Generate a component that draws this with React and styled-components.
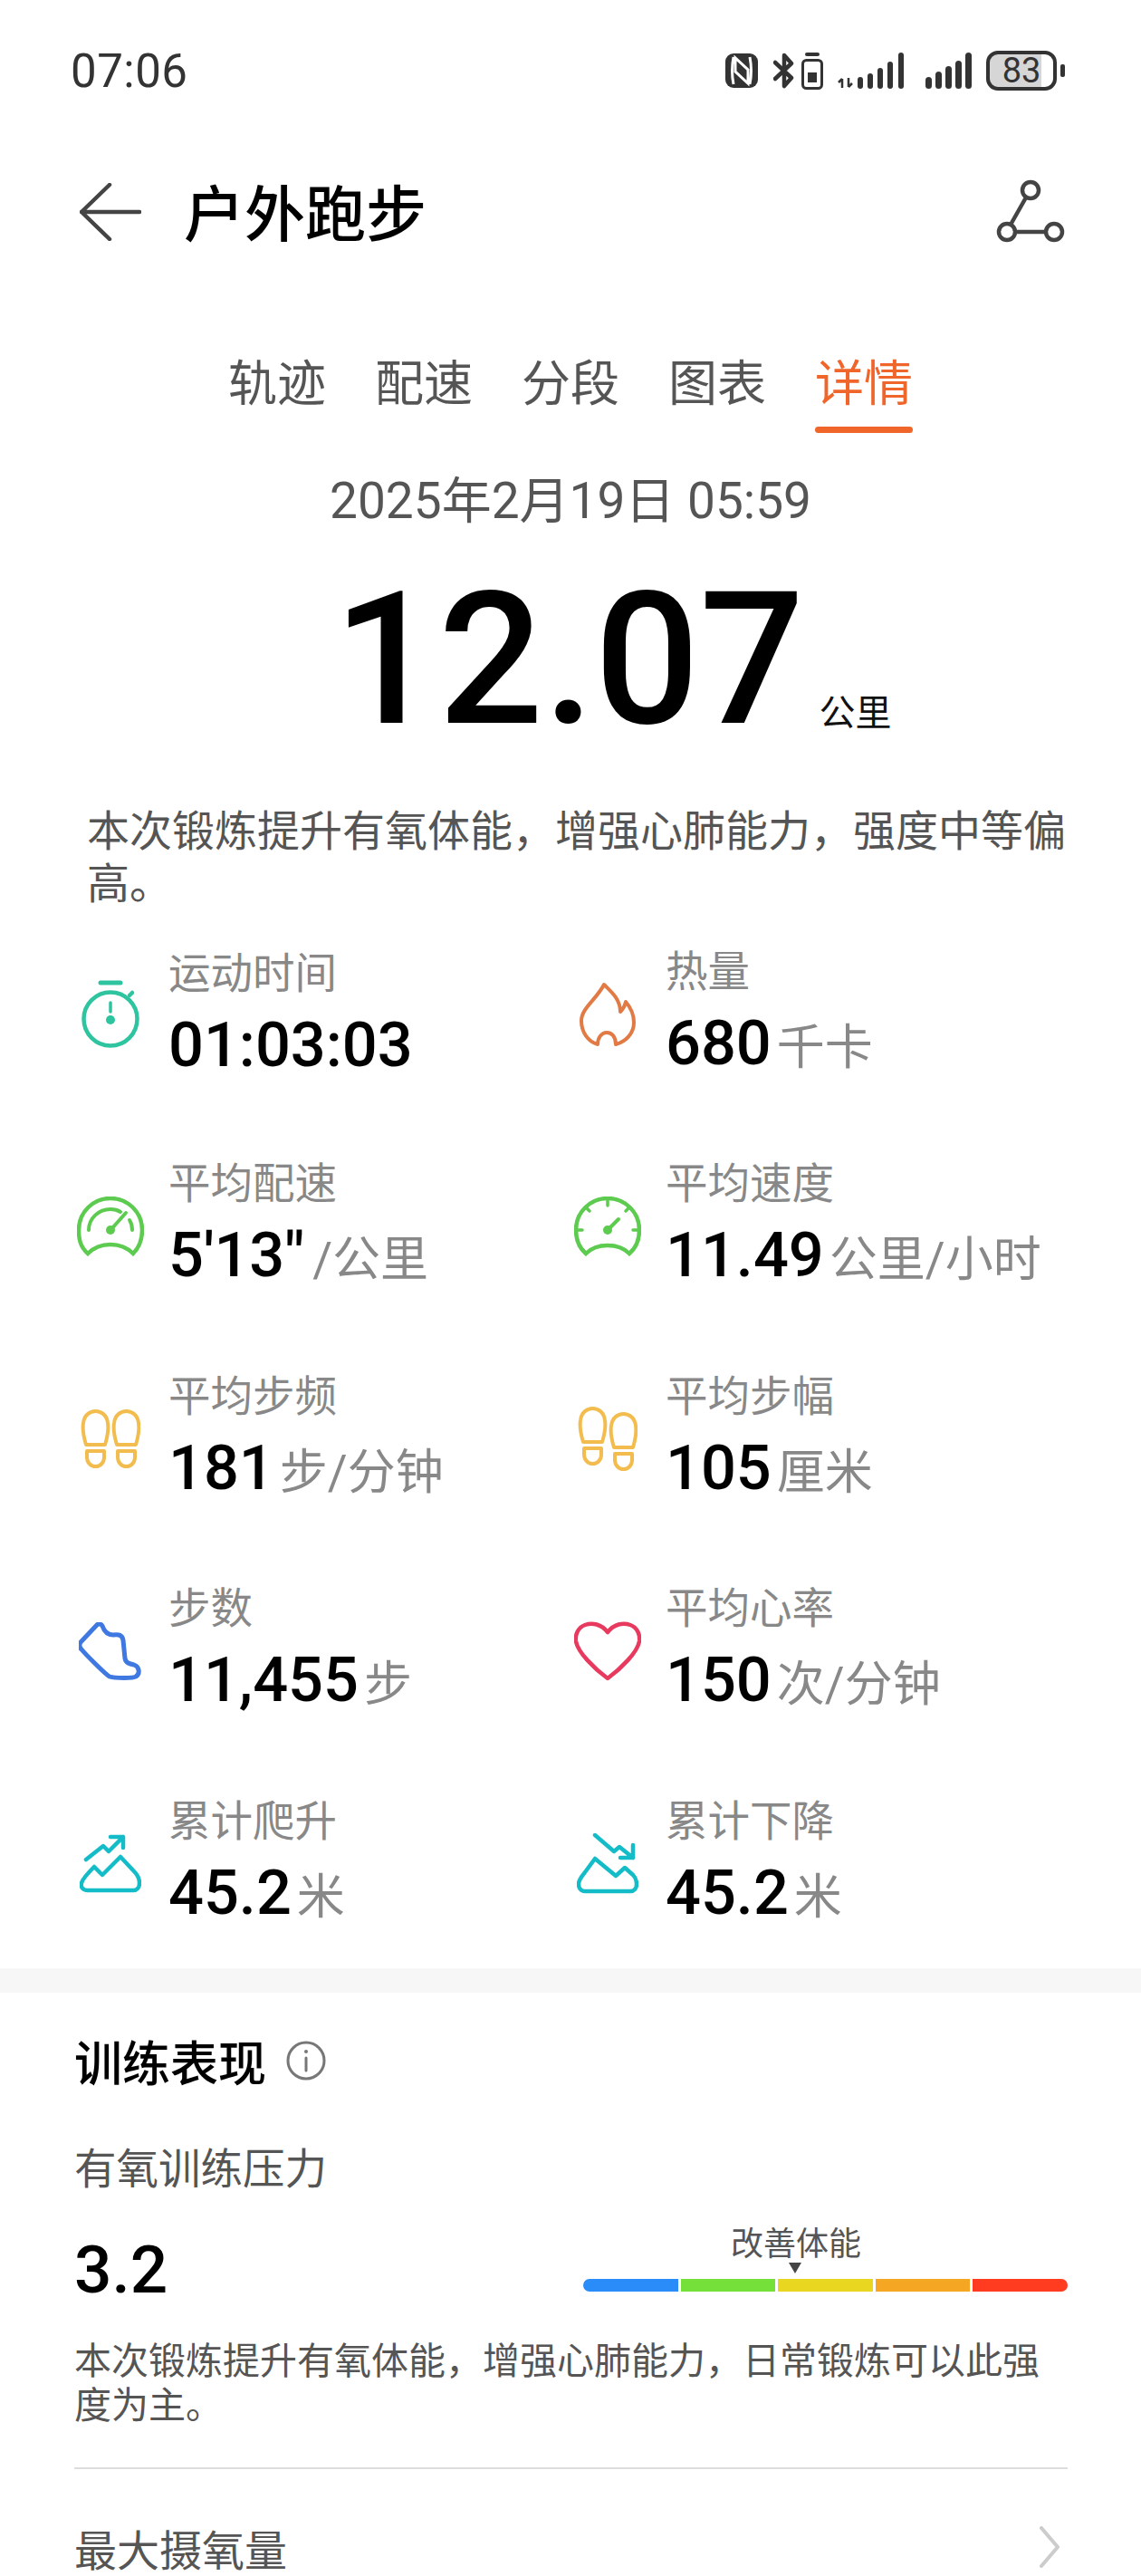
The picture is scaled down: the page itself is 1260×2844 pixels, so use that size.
import React from "react";
import styled, { createGlobalStyle } from "styled-components";

const GlobalStyle = createGlobalStyle`
  html, body {
    margin: 0;
    padding: 0;
    background: #fff;
  }
  body {
    font-family: Roboto, "Noto Sans CJK SC", sans-serif;
  }
`;

const Page = styled.div`
  width: 1260px;
  height: 2844px;
  overflow: hidden;
  background: #fff;
`;

const StatusBar = styled.div`
  height: 156px;
  display: flex;
  align-items: center;
  justify-content: space-between;
  padding: 0 84px 0 78px;
  box-sizing: border-box;
`;

const Clock = styled.div`
  font-size: 51px;
  color: #333;
  letter-spacing: 0.5px;
`;

const StatusIcons = styled.div`
  display: flex;
  align-items: center;
`;

const StatusIcon = styled.svg`
  display: block;
  margin-left: ${(p) => p.$gap || 0}px;
`;

const Battery = styled.div`
  width: 78px;
  height: 44px;
  margin-left: 16px;
  box-sizing: border-box;
  border: 4px solid #333;
  border-radius: 13px;
  background: linear-gradient(90deg, #d6d6d6 82%, #fff 82%);
  color: #333;
  font-size: 38px;
  line-height: 36px;
  text-align: center;
`;

const BatteryNub = styled.div`
  width: 5px;
  height: 14px;
  margin-left: 4px;
  background: #333;
  border-radius: 2px;
`;

const Header = styled.div`
  height: 156px;
  display: flex;
  align-items: center;
  padding: 0 84px 0 88px;
`;

const Title = styled.h1`
  flex: 1;
  margin: 0 0 0 47px;
  padding-bottom: 6px;
  font-size: 67px;
  font-weight: 500;
  color: #000;
`;

const Tabs = styled.div`
  display: flex;
  justify-content: center;
  gap: 54px;
  margin-top: 78px;
`;

const Tab = styled.div`
  font-size: 54px;
  line-height: 70px;
  height: 88px;
  position: relative;
  color: ${(p) => (p.$active ? "#f0652a" : "#555")};

  &::after {
    content: "";
    display: ${(p) => (p.$active ? "block" : "none")};
    position: absolute;
    left: 0;
    right: 0;
    bottom: 0;
    height: 7px;
    border-radius: 4px;
    background: #f0652a;
  }
`;

const DateLine = styled.div`
  margin-top: 40px;
  text-align: center;
  font-size: 55px;
  line-height: 70px;
  color: #555;
`;

const Distance = styled.div`
  display: flex;
  align-items: flex-end;
  padding-left: 368px;
  height: 220px;
  margin-top: 31px;
`;

const DistanceValue = styled.div`
  font-size: 204px;
  font-weight: 500;
  line-height: 220px;
  color: #000;
`;

const DistanceUnit = styled.div`
  font-size: 40px;
  line-height: 56px;
  margin: 0 0 23px 16px;
  color: #111;
`;

const Summary = styled.p`
  margin: 50px 78px 0 96px;
  font-size: 47px;
  line-height: 58px;
  color: #555;
`;

const StatsGrid = styled.div`
  display: grid;
  grid-template-columns: 549px 1fr;
  row-gap: 90.5px;
  padding-left: 76px;
  margin-top: 40px;
`;

const Stat = styled.div`
  display: flex;
  align-items: center;
  height: 144px;
`;

const IconSlot = styled.div`
  width: 92px;
  margin-right: 18px;
  margin-top: 5px;
  display: flex;
  justify-content: center;
  flex-shrink: 0;
`;

const StatText = styled.div`
  display: flex;
  flex-direction: column;
`;

const StatLabel = styled.div`
  font-size: 46.5px;
  line-height: 60px;
  color: #888;
`;

const StatValue = styled.div`
  margin-top: 14px;
  font-size: 68.5px;
  font-weight: 500;
  line-height: 70px;
  color: #000;
  white-space: nowrap;
`;

const StatUnit = styled.span`
  font-size: 53px;
  font-weight: 400;
  color: #888;
  margin-left: ${(p) => (p.$tight ? 9 : 6)}px;
`;

const Band = styled.div`
  height: 27px;
  margin-top: 46px;
  background: #f7f7f7;
`;

const Section = styled.div`
  padding: 0 81px 0 82px;
`;

const SectionHead = styled.div`
  display: flex;
  align-items: center;
  gap: 22px;
  margin-top: 40px;
  height: 70px;
`;

const SectionTitle = styled.div`
  font-size: 53px;
  font-weight: 500;
  color: #000;
`;

const MetricName = styled.div`
  margin-top: 55px;
  font-size: 46.5px;
  line-height: 60px;
  color: #555;
`;

const MetricRow = styled.div`
  display: flex;
  justify-content: space-between;
  align-items: flex-end;
  margin-top: 28px;
  height: 90px;
`;

const MetricValue = styled.div`
  font-size: 73px;
  font-weight: 500;
  line-height: 84px;
  color: #000;
  transform: translateY(5px);
`;

const Scale = styled.div`
  width: 535px;
  position: relative;
  margin-bottom: 13px;
`;

const ScaleLabel = styled.div`
  position: absolute;
  left: 163px;
  bottom: 30px;
  font-size: 36px;
  line-height: 44px;
  color: #555;
  white-space: nowrap;
`;

const ScaleMarker = styled.div`
  position: absolute;
  left: 227px;
  bottom: 20px;
  border-left: 7px solid transparent;
  border-right: 7px solid transparent;
  border-top: 12px solid #444;
`;

const ScaleBar = styled.div`
  display: flex;
  gap: 3px;
  height: 14px;
  border-radius: 7px;
  overflow: hidden;
`;

const ScaleSegment = styled.div`
  flex: 1;
  background: ${(p) => p.$color};
`;

const MetricNote = styled.p`
  margin: 40px 30px 0 0;
  font-size: 41px;
  line-height: 49px;
  color: #555;
`;

const Divider = styled.div`
  height: 2px;
  margin-top: 43px;
  background: #ddd;
`;

const LinkRow = styled.div`
  display: flex;
  align-items: center;
  justify-content: space-between;
  margin-top: 53px;
  height: 66px;
  padding-right: 8px;
`;

const LinkName = styled.div`
  font-size: 47px;
  color: #555;
`;

const Stopwatch = () => (
  <svg width="66" height="76" viewBox="0 0 66 76" fill="none" stroke="#2ec4a0" strokeWidth="4.5" strokeLinecap="round">
    <path d="M22 3h22" strokeWidth="5" />
    <circle cx="33" cy="43" r="29.5" />
    <path d="M54 17l3-3" />
    <path d="M33 25v10" strokeWidth="3.5" />
    <circle cx="33" cy="44" r="5" fill="#2ec4a0" stroke="none" />
  </svg>
);

const Flame = () => (
  <svg width="62" height="72" viewBox="-1 -1 62 72" fill="none" stroke="#e27a45" strokeWidth="4" strokeLinejoin="round">
    <path d="M26 2C34 10 44 18 44 32C47 29 49 26 50 21C56 28 59 36 59 44C59 56 50 65 39 68C39 60 35 55 29 55C23 55 19 61 19 68C8 65 1 54 1 42C1 28 18 18 26 2Z" />
  </svg>
);

const PaceGauge = () => (
  <svg width="74" height="66" viewBox="0 0 74 66" fill="none" stroke="#5ccb4f" strokeWidth="4.5" strokeLinecap="round">
    <path d="M12 63C3 55 2 46 2 37C2 17 18 2 37 2C56 2 72 17 72 37C72 46 70 55 62 63C55 56 46 53 37 53C28 53 19 56 12 63Z" />
    <path d="M13 37C13 24 24 14 37 14C41 14 45 15 48 17" strokeWidth="4" />
    <path d="M58 26C60 29 61 33 61 37" strokeWidth="4" />
    <path d="M38 36L54 18" strokeWidth="4" />
    <circle cx="37" cy="37" r="5" fill="#5ccb4f" stroke="none" />
  </svg>
);

const SpeedGauge = () => (
  <svg width="74" height="66" viewBox="0 0 74 66" fill="none" stroke="#5ccb4f" strokeWidth="4.5" strokeLinecap="round">
    <path d="M13 63C5 56 2 46 2 37C2 17 18 2 37 2C56 2 72 17 72 37C72 46 69 56 61 63C54 56 46 54 37 54C28 54 20 56 13 63Z" />
    <path d="M37 5v5M14 13l3 3M60 13l-3 3M3 37h6M71 37h-6" strokeWidth="3.5" />
    <path d="M38 36L49 25" strokeWidth="4" />
    <circle cx="37" cy="37" r="5" fill="#5ccb4f" stroke="none" />
  </svg>
);

const Footprint = ({ x, y, w }) => {
  const cx = x + w / 2;
  return (
    <g>
      <path d={`M${x + 4} ${y + 38}C${x + 1} ${y + 28} ${x} ${y + 20} ${x + 1} ${y + 14}C${x + 2} ${y + 5} ${cx - 6} ${y + 1} ${cx} ${y + 1}C${cx + 6} ${y + 1} ${x + w - 2} ${y + 5} ${x + w - 1} ${y + 14}C${x + w} ${y + 20} ${x + w - 1} ${y + 28} ${x + w - 4} ${y + 38}Z`} />
      <path d={`M${x + 5} ${y + 45}H${x + w - 5}V${y + 52}C${x + w - 5} ${y + 58} ${cx + 5} ${y + 62} ${cx} ${y + 62}C${cx - 5} ${y + 62} ${x + 5} ${y + 58} ${x + 5} ${y + 52}Z`} />
    </g>
  );
};

const Feet = ({ offset }) => (
  <svg width="66" height={66 + offset} viewBox={`0 0 66 ${66 + offset}`} fill="none" stroke="#f2bd4e" strokeWidth="4" strokeLinejoin="round">
    <Footprint x={2} y={1} w={29} />
    <Footprint x={36} y={1 + offset} w={29} />
  </svg>
);

const Shoe = () => (
  <svg width="70" height="64" viewBox="0 0 70 64" fill="none" stroke="#3f78e0" strokeWidth="5" strokeLinejoin="round">
    <path d="M20 3C22 1 25 2 26 4C28 10 32 14 38 14C44 13 48 14 49 20L51 40C52 45 56 46 61 47C67 49 68 57 63 60C60 62 40 62 34 60C30 58 8 36 3 30C0 27 0 24 3 21Z" />
  </svg>
);

const Heart = () => (
  <svg width="74" height="66" viewBox="0 0 74 66" fill="none" stroke="#e83a5e" strokeWidth="4.5" strokeLinejoin="round">
    <path d="M37 12C30 3 20 1 12 4C4 7 1 15 2 22C4 34 22 52 37 63C52 52 70 34 72 22C73 15 70 7 62 4C54 1 44 3 37 12Z" />
  </svg>
);

const ClimbUp = () => (
  <svg width="68" height="66" viewBox="0 0 68 66" fill="none" stroke="#14bcc8" strokeWidth="4.5" strokeLinecap="round" strokeLinejoin="round">
    <path d="M9 62C3 62 1 58 2 54C3 50 10 42 16 36L25 45L45 25L60 41C64 45 66 50 66 54C66 59 63 62 59 62Z" />
    <path d="M7 28L26 13L32 19L48 3M34 3H48V15" />
  </svg>
);

const ClimbDown = () => (
  <svg width="68" height="67" viewBox="0 0 68 67" fill="none" stroke="#14bcc8" strokeWidth="4.5" strokeLinecap="round" strokeLinejoin="round">
    <path d="M9 64C4 64 2 60 2 56C2 51 6 47 9 43L20 28L43 47L53 38L62 46C65 49 66 52 66 56C66 61 63 64 59 64Z" />
    <path d="M20 2L41 20L47 15L62 27M48 27H62V13" />
  </svg>
);

const stats = [
  { label: "运动时间", value: "01:03:03", icon: <Stopwatch /> },
  { label: "热量", value: "680", unit: "千卡", icon: <Flame /> },
  { label: "平均配速", value: "5'13\"", unit: "/公里", tight: true, icon: <PaceGauge /> },
  { label: "平均速度", value: "11.49", unit: "公里/小时", icon: <SpeedGauge /> },
  { label: "平均步频", value: "181", unit: "步/分钟", icon: <Feet offset={0} /> },
  { label: "平均步幅", value: "105", unit: "厘米", icon: <Feet offset={6} /> },
  { label: "步数", value: "11,455", unit: "步", icon: <Shoe /> },
  { label: "平均心率", value: "150", unit: "次/分钟", icon: <Heart /> },
  { label: "累计爬升", value: "45.2", unit: "米", icon: <ClimbUp /> },
  { label: "累计下降", value: "45.2", unit: "米", icon: <ClimbDown /> },
];

const tabs = ["轨迹", "配速", "分段", "图表", "详情"];
const scaleColors = ["#2a8cf8", "#76e03b", "#e8d620", "#f5a623", "#ff3b20"];

export default function App() {
  return (
    <Page>
      <GlobalStyle />
      <StatusBar>
        <Clock>07:06</Clock>
        <StatusIcons>
          <StatusIcon width="36" height="38" viewBox="0 0 36 38">
            <rect width="36" height="38" rx="9" fill="#333" />
            <path d="M9 4C7 14 7 24 9 34M27 4C29 14 29 24 27 34M11 5V20L25 33V18Z" stroke="#fff" strokeWidth="3" fill="none" />
          </StatusIcon>
          <StatusIcon $gap={17} width="24" height="40" viewBox="0 0 24 40" fill="none" stroke="#333" strokeWidth="4.5" strokeLinecap="round" strokeLinejoin="round">
            <path d="M2 11L20 28L12 37V3L20 12L2 29" />
          </StatusIcon>
          <StatusIcon $gap={7} width="24" height="41" viewBox="0 0 24 41" fill="none" stroke="#333">
            <path d="M6 2H18" strokeWidth="4" strokeLinecap="round" />
            <rect x="1.5" y="8.5" width="21" height="31" rx="4" strokeWidth="3" />
            <rect x="7" y="22" width="10" height="11" fill="#333" stroke="none" />
          </StatusIcon>
          <StatusIcon $gap={16} width="73" height="40" viewBox="0 0 73 40" fill="#333">
            <path d="M5 29v10M1 33l4-4M12 28v10M12 38l4-4" stroke="#333" strokeWidth="2.5" fill="none" />
            <rect x="22" y="27" width="6" height="13" rx="3" />
            <rect x="33" y="23" width="6" height="17" rx="3" />
            <rect x="44" y="17" width="6" height="23" rx="3" />
            <rect x="55" y="10" width="6" height="30" rx="3" />
            <rect x="67" y="0" width="6" height="40" rx="3" />
          </StatusIcon>
          <StatusIcon $gap={24} width="51" height="40" viewBox="0 0 51 40" fill="#333">
            <rect x="0" y="27" width="7" height="13" rx="3.5" />
            <rect x="11" y="21" width="7" height="19" rx="3.5" />
            <rect x="22" y="15" width="7" height="25" rx="3.5" />
            <rect x="33" y="9" width="7" height="31" rx="3.5" />
            <rect x="44" y="0" width="7" height="40" rx="3.5" />
          </StatusIcon>
          <Battery>83</Battery>
          <BatteryNub />
        </StatusIcons>
      </StatusBar>

      <Header>
        <svg width="68" height="64" viewBox="0 0 68 64" fill="none" stroke="#444" strokeWidth="4.5" strokeLinecap="round" strokeLinejoin="round">
          <path d="M33 2L2 32L33 62M2 32H66" />
        </svg>
        <Title>户外跑步</Title>
        <svg width="76" height="72" viewBox="0 0 76 72" fill="none" stroke="#444" strokeWidth="4.5">
          <circle cx="38" cy="12" r="9" />
          <circle cx="12" cy="58" r="9" />
          <circle cx="64" cy="58" r="9" />
          <path d="M33 20L16 50M21 58H55" />
        </svg>
      </Header>

      <Tabs>
        {tabs.map((t) => (
          <Tab key={t} $active={t === "详情"}>{t}</Tab>
        ))}
      </Tabs>

      <DateLine>2025年2月19日 05:59</DateLine>

      <Distance>
        <DistanceValue>12.07</DistanceValue>
        <DistanceUnit>公里</DistanceUnit>
      </Distance>

      <Summary>本次锻炼提升有氧体能，增强心肺能力，强度中等偏高。</Summary>

      <StatsGrid>
        {stats.map((s) => (
          <Stat key={s.label}>
            <IconSlot>{s.icon}</IconSlot>
            <StatText>
              <StatLabel>{s.label}</StatLabel>
              <StatValue>
                {s.value}
                {s.unit && <StatUnit $tight={s.tight}>{s.unit}</StatUnit>}
              </StatValue>
            </StatText>
          </Stat>
        ))}
      </StatsGrid>

      <Band />

      <Section>
        <SectionHead>
          <SectionTitle>训练表现</SectionTitle>
          <svg width="44" height="44" viewBox="0 0 44 44" fill="none" stroke="#777" strokeWidth="3">
            <circle cx="22" cy="22" r="20" />
            <path d="M22 19V33" strokeLinecap="round" />
            <circle cx="22" cy="12" r="2" fill="#777" stroke="none" />
          </svg>
        </SectionHead>

        <MetricName>有氧训练压力</MetricName>
        <MetricRow>
          <MetricValue>3.2</MetricValue>
          <Scale>
            <ScaleLabel>改善体能</ScaleLabel>
            <ScaleMarker />
            <ScaleBar>
              {scaleColors.map((c) => (
                <ScaleSegment key={c} $color={c} />
              ))}
            </ScaleBar>
          </Scale>
        </MetricRow>
        <MetricNote>本次锻炼提升有氧体能，增强心肺能力，日常锻炼可以此强度为主。</MetricNote>
        <Divider />
        <LinkRow>
          <LinkName>最大摄氧量</LinkName>
          <svg width="24" height="46" viewBox="0 0 24 46" fill="none" stroke="#ccc" strokeWidth="4" strokeLinecap="round" strokeLinejoin="round">
            <path d="M3 2L21 23L3 44" />
          </svg>
        </LinkRow>
      </Section>
    </Page>
  );
}
